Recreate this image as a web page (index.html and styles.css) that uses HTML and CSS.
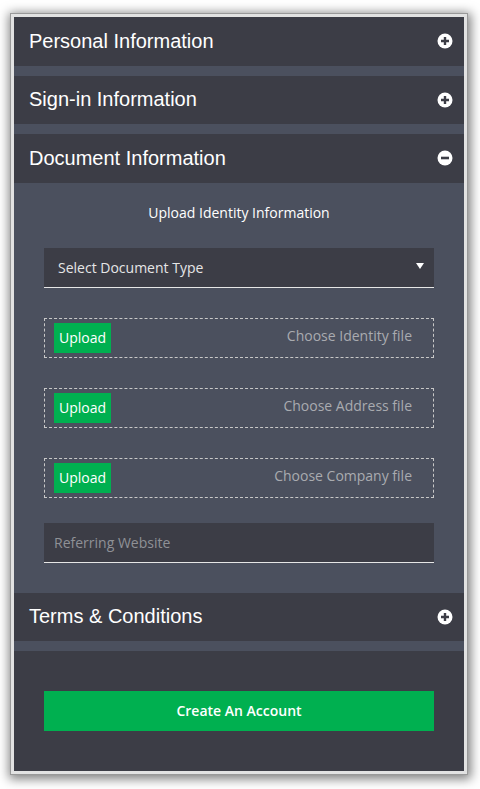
FILE: index.html
```html
<!DOCTYPE html>
<html>
<head>
<meta charset="utf-8">
<link rel="stylesheet" href="styles.css">
</head>
<body>
<div class="frame">
  <div class="panel">
    <div class="head"><span class="title">Personal Information</span>
      <svg class="ico" viewBox="0 0 16 16"><circle cx="8" cy="8" r="7.5" fill="#fff"/><path d="M8 4v8M4 8h8" stroke="#3c3d46" stroke-width="2.4"/></svg>
    </div>
  </div>
  <div class="panel">
    <div class="head"><span class="title">Sign-in Information</span>
      <svg class="ico" viewBox="0 0 16 16"><circle cx="8" cy="8" r="7.5" fill="#fff"/><path d="M8 4v8M4 8h8" stroke="#3c3d46" stroke-width="2.4"/></svg>
    </div>
  </div>
  <div class="panel open">
    <div class="head"><span class="title">Document Information</span>
      <svg class="ico" viewBox="0 0 16 16"><circle cx="8" cy="8" r="7.5" fill="#fff"/><path d="M4 8h8" stroke="#3c3d46" stroke-width="2.6"/></svg>
    </div>
    <div class="body">
      <div class="subtitle">Upload Identity Information</div>
      <div class="select"><span>Select Document Type</span><span class="caret"></span></div>
      <div class="file"><span class="upload">Upload</span><span class="fname">Choose Identity file</span></div>
      <div class="file"><span class="upload">Upload</span><span class="fname">Choose Address file</span></div>
      <div class="file last"><span class="upload">Upload</span><span class="fname">Choose Company file</span></div>
      <div class="input">Referring Website</div>
    </div>
  </div>
  <div class="panel">
    <div class="head"><span class="title">Terms &amp; Conditions</span>
      <svg class="ico" viewBox="0 0 16 16"><circle cx="8" cy="8" r="7.5" fill="#fff"/><path d="M8 4v8M4 8h8" stroke="#3c3d46" stroke-width="2.4"/></svg>
    </div>
  </div>
  <div class="footer">
    <div class="btn">Create An Account</div>
  </div>
</div>
</body>
</html>
```

FILE: styles.css
```css
html, body { margin: 0; padding: 0; background: #fff; }
body { padding: 14px 0 15px 11px; }
.frame {
  box-sizing: content-box;
  width: 450px;
  height: 754px;
  border: 3px solid #e2e2e2;
  box-shadow: 0 0 0 1px #999, 1px 2px 10px 3px rgba(0,0,0,0.5);
  background: #4b505e;
  display: flex;
  flex-direction: column;
  font-family: "Open Sans", sans-serif;
  overflow: hidden;
}
.panel { margin-bottom: 10px; flex-shrink: 0; }
.panel.open { margin-bottom: 0; }
.head {
  height: 48.5px;
  background: #3c3d46;
  display: flex;
  align-items: center;
  justify-content: space-between;
  padding: 0 11px 0 15px;
}
.title {
  font-family: "Liberation Sans", Arial, sans-serif;
  font-size: 20px;
  color: #fff;
}
.ico { width: 16px; height: 16px; }
.body {
  padding: 20px 30px 30px;
  display: flex;
  flex-direction: column;
}
.subtitle {
  text-align: center;
  color: #fff;
  font-size: 14px;
  line-height: 20px;
  margin-bottom: 25px;
}
.select {
  height: 39px;
  background: #3c3d46;
  border-bottom: 1px solid #e6e6e6;
  display: flex;
  align-items: center;
  justify-content: space-between;
  padding: 0 10px 0 14px;
  color: #e6e6e6;
  font-size: 14px;
  margin-bottom: 30px;
}
.caret {
  width: 0; height: 0;
  border-left: 4px solid transparent;
  border-right: 4px solid transparent;
  border-top: 6px solid #fff;
  margin-top: -2px;
}
.file {
  height: 38px;
  border: 1px dashed #c8c8c8;
  display: flex;
  align-items: center;
  justify-content: space-between;
  padding: 0 21px 0 9px;
  margin-bottom: 30px;
}
.file.last { margin-bottom: 25px; }
.upload {
  background: #00b050;
  color: #fff;
  font-size: 14px;
  height: 30px;
  line-height: 30px;
  padding: 0 5px;
  width: 47px;
}
.fname {
  color: #a9abb0;
  font-size: 14px;
  margin-top: -4px;
}
.input {
  height: 39px;
  background: #3c3d46;
  border-bottom: 1px solid #e6e6e6;
  color: #8f9196;
  font-size: 14px;
  line-height: 39px;
  padding: 0 10px;
}
.footer {
  flex: 1 1 0;
  min-height: 0;
  background: #3c3d46;
  padding: 40px 30px;
}
.btn {
  height: 40px;
  line-height: 40px;
  background: #00b050;
  color: #fff;
  text-align: center;
  font-weight: 600;
  font-size: 14px;
}
```
